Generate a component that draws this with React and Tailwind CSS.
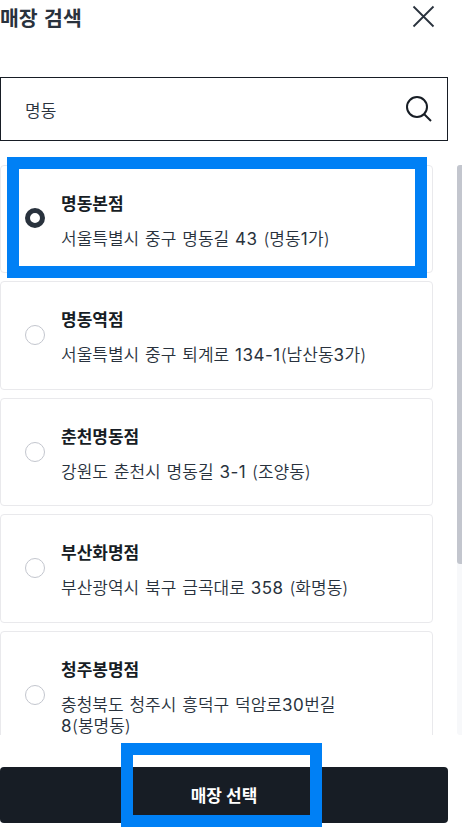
import React from 'react';

const stores = [
  { id: 1, name: '명동본점', address: '서울특별시 중구 명동길 43 (명동1가)' },
  { id: 2, name: '명동역점', address: '서울특별시 중구 퇴계로 134-1(남산동3가)' },
  { id: 3, name: '춘천명동점', address: '강원도 춘천시 명동길 3-1 (조양동)' },
  { id: 4, name: '부산화명점', address: '부산광역시 북구 금곡대로 358 (화명동)' },
  { id: 5, name: '청주봉명점', address: '충청북도 청주시 흥덕구 덕암로30번길 8(봉명동)' },
];

const App = () => {
  const [selected, setSelected] = React.useState(1);

  return (
    <div className="relative flex h-[832px] w-[462px] flex-col overflow-hidden bg-white font-['Inter','Noto_Sans_CJK_KR',sans-serif] text-[17px] text-[#29323d] [word-spacing:1px]">
      {/* Header */}
      <header className="flex h-[77px] w-[448px] shrink-0 items-start justify-between">
        <h1 className="pt-[5px] text-[20.5px] leading-7 font-bold [word-spacing:1.5px]">매장 검색</h1>
        <button type="button" aria-label="닫기" className="mt-1 mr-3">
          <CloseIcon />
        </button>
      </header>

      {/* Search */}
      <div className="flex h-16 w-[448px] shrink-0 items-center justify-between border border-[#171d25] pr-[14px] pl-6">
        <span className="pt-[5px] font-[350]">명동</span>
        <button type="button" aria-label="검색">
          <SearchIcon />
        </button>
      </div>

      {/* Store list */}
      <div className="mt-6 flex h-[570px] shrink-0 justify-between overflow-hidden">
        <ul className="flex w-[433px] flex-col gap-2">
          {stores.map((store) => (
            <StoreItem
              key={store.id}
              store={store}
              checked={store.id === selected}
              onSelect={() => setSelected(store.id)}
            />
          ))}
        </ul>
        <div className="h-full w-[5px] rounded-l-[3px] bg-[#f7f8fa]">
          <div className="h-[399px] rounded-l-[3px] bg-[#c3c6ce]" />
        </div>
      </div>

      {/* Submit */}
      <button
        type="button"
        className="mt-8 h-14 w-[448px] shrink-0 rounded bg-[#171d25] pt-1 font-bold text-white"
      >
        매장 선택
      </button>

      {/* Guide highlights */}
      <div className="pointer-events-none absolute top-[157px] left-[7px] h-[121px] w-[420px] border-12 border-[#0080f5]" />
      <div className="pointer-events-none absolute top-[743px] left-[121px] h-[84px] w-[201px] border-12 border-[#0080f5]" />
    </div>
  );
};

const StoreItem = ({ store, checked, onSelect }) => (
  <li
    onClick={onSelect}
    className="flex shrink-0 cursor-pointer items-center gap-4 rounded border border-[#e9e9ec] px-6 pt-[23px] pb-[22.45px]"
  >
    <span
      className={
        checked
          ? 'mb-[2.2px] size-5 shrink-0 rounded-full border-[5px] border-[#29323d]'
          : 'mb-[1.1px] size-5 shrink-0 rounded-full border border-[#c3c6ce]'
      }
    />
    <div className="w-[320px] pt-[5px]">
      <p className="leading-[21px] font-bold text-[#171d25]">{store.name}</p>
      <p className="mt-[14px] leading-[21px] font-[350] break-keep [word-spacing:1.1px]">
        <Address text={store.address} />
      </p>
    </div>
  </li>
);

// digits look too thin next to the hangul, so they get the regular weight
const Address = ({ text }) =>
  text.split(/([\d-]+)/).map((part, i) =>
    i % 2 ? (
      <span key={i} className="font-normal tracking-[0.5px]">
        {part}
      </span>
    ) : (
      part
    )
  );

const CloseIcon = () => (
  <svg width="25" height="25" viewBox="0 0 25 25" fill="none" stroke="#29323d" strokeWidth="1.8">
    <path d="M2.5 2.5 22.5 22.5M22.5 2.5 2.5 22.5" />
  </svg>
);

const SearchIcon = () => (
  <svg width="28" height="28" viewBox="0 0 28 28" fill="none" stroke="#171d25" strokeWidth="2">
    <circle cx="12" cy="12" r="10" />
    <path d="M19 19l7 7" />
  </svg>
);

export default App;
